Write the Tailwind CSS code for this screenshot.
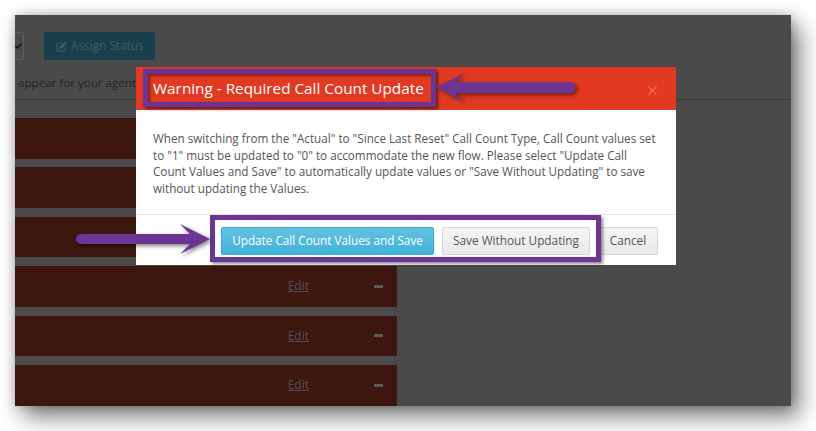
<!DOCTYPE html>
<html lang="en">
<head>
  <meta charset="UTF-8" />
  <title>Warning</title>
  <script src="https://cdn.jsdelivr.net/npm/@tailwindcss/browser@4"></script>
</head>
<body class="bg-white font-['Open_Sans',sans-serif] overflow-hidden">
  <div class="w-[816px] h-[431px] p-[15px]">
    <div class="relative w-[776px] h-[391px] overflow-hidden bg-[#4a4a4a] shadow-[8px_10px_22px_rgba(0,0,0,0.55),0_0_9px_rgba(0,0,0,0.2)]">

      <!-- page behind the overlay -->
      <div class="h-[85px] border-b border-[#3a3a3a]">
        <div class="flex gap-[20px] pt-[17px]">
          <div class="flex items-center justify-end w-[9px] h-[28px] pr-[1px] border border-l-0 border-[#5e5e5e] rounded-r-[3px]">
            <svg width="7" height="6" viewBox="0 0 7 6" class="shrink-0"><path d="M0.5 3.2 L2.4 5 L6.3 0.8" fill="none" stroke="#111" stroke-width="1.6"/></svg>
          </div>
          <div class="flex items-center gap-[4px] w-[111px] h-[28px] pl-[12px] bg-[#17404c] rounded-[2px] text-[11.8px] text-[#3f5d66]">
            <svg width="11" height="11" viewBox="0 0 12 12" fill="none" stroke="#3f5d66" stroke-width="1.2"><path d="M9.5 7v3a1 1 0 0 1-1 1H2a1 1 0 0 1-1-1V3.5a1 1 0 0 1 1-1h4"/><path d="M4.5 8l.4-2L10 1l1.3 1.3L6.3 7.4z" fill="#3f5d66"/></svg>
            <span>Assign Status</span>
          </div>
        </div>
        <p class="pl-[3px] mt-[14px] text-[11.6px] leading-[18px] whitespace-nowrap text-[#242424]">appear for your agent</p>
      </div>

      <div class="flex flex-col gap-[8.8px] w-[382px] mt-[18px]">
        <div class="h-[40.6px] bg-[#3d1610]"></div>
        <div class="h-[40.6px] bg-[#3d1610]"></div>
        <div class="h-[40.6px] bg-[#3d1610]"></div>
        <div class="flex items-center justify-end h-[40.6px] pr-[14px] bg-[#3d1610]">
          <span class="text-[12px] text-[#505050] underline">Edit</span>
          <span class="w-[9px] h-[3px] ml-[65px] bg-[#5a5a5a]"></span>
        </div>
        <div class="flex items-center justify-end h-[40.6px] pr-[14px] bg-[#3d1610]">
          <span class="text-[12px] text-[#505050] underline">Edit</span>
          <span class="w-[9px] h-[3px] ml-[65px] bg-[#5a5a5a]"></span>
        </div>
        <div class="flex items-center justify-end h-[40.6px] pr-[14px] bg-[#3d1610]">
          <span class="text-[12px] text-[#505050] underline">Edit</span>
          <span class="w-[9px] h-[3px] ml-[65px] bg-[#5a5a5a]"></span>
        </div>
      </div>

      <!-- modal -->
      <div class="absolute left-[121px] top-[52px] w-[540px] h-[198px] flex flex-col bg-white">
        <div class="relative flex items-center h-[43px] pl-[17px] pb-[2px] bg-[#e23a22]">
          <h2 class="text-[15.3px] leading-[20px] font-medium text-white whitespace-nowrap">Warning - Required Call Count Update</h2>
          <svg class="absolute left-[512px] top-[19px]" width="9" height="9" viewBox="0 0 9 9"><path d="M0.5 0.5L8.5 8.5M8.5 0.5L0.5 8.5" stroke="#ea6b58" stroke-width="1.4"/></svg>
        </div>
        <p class="h-[104px] pt-[20px] pl-[17px] pr-[15px] text-[11.7px] leading-[16.5px] text-[#555]">When switching from the "Actual" to "Since Last Reset" Call Count Type, Call Count values set to "1" must be updated to "0" to accommodate the new flow. Please select "Update Call Count Values and Save" to automatically update values or "Save Without Updating" to save without updating the Values.</p>
        <div class="flex flex-1 items-center justify-end gap-[8px] pr-[18px] pt-[1px] border-t border-[#e5e5e5]">
          <button class="w-[213px] h-[28px] text-[11.75px] text-white bg-gradient-to-b from-[#62c2e2] to-[#41b1d9] border border-[#35acd6] rounded-[2px]">Update Call Count Values and Save</button>
          <button class="w-[148px] h-[28px] text-[11.8px] text-[#555] bg-gradient-to-b from-[#f5f5f5] to-[#e9e9e9] border border-[#d6d6d6] rounded-[2px]">Save Without Updating</button>
          <button class="w-[60px] h-[28px] text-[11.8px] text-[#555] bg-gradient-to-b from-[#f5f5f5] to-[#e9e9e9] border border-[#d6d6d6] rounded-[2px]">Cancel</button>
        </div>
      </div>

      <!-- purple annotations -->
      <div class="absolute left-[128px] top-[54px] w-[293px] h-[38px] border-[5px] border-[#6c3594] shadow-[2px_2px_3px_rgba(0,0,0,0.55),inset_2px_2px_3px_rgba(0,0,0,0.45)]"></div>
      <div class="absolute left-[195px] top-[200px] w-[391px] h-[47px] border-[5px] border-[#6c3594] shadow-[2px_2px_3px_rgba(0,0,0,0.45)]"></div>
      <svg class="absolute left-[416px] top-[52px] drop-shadow-[2px_2px_2px_rgba(0,0,0,0.5)]" width="150" height="40" viewBox="0 0 150 40">
        <path d="M5 20 L34 6 L24 15 H139 A5.5 5.5 0 0 1 139 26 H24 L34 35 Z" fill="#6c3594"/>
      </svg>
      <svg class="absolute left-[55px] top-[204px] drop-shadow-[2px_2px_2px_rgba(0,0,0,0.5)]" width="145" height="40" viewBox="0 0 145 40">
        <path d="M140 20 L110 5 L120 15 H11 A5 5 0 0 0 11 25 H120 L110 35 Z" fill="#6c3594"/>
      </svg>
    </div>
  </div>
</body>
</html>
